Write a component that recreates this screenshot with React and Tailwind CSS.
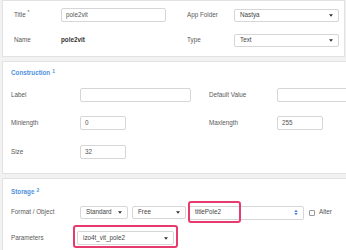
import React from 'react';

const Caret = () => (
  <svg width="4" height="3" viewBox="0 0 4 3" className="shrink-0">
    <path d="M0 0.3h4L2 2.8z" fill="#333" />
  </svg>
);

const UpDown = () => (
  <svg width="4" height="7" viewBox="0 0 4 7" className="shrink-0">
    <path d="M0.3 3L2 0.8 3.7 3z" fill="#4a7fd0" />
    <path d="M0.3 4L2 6.2 3.7 4z" fill="#4a7fd0" />
  </svg>
);

const Field = ({ value, w, h = 'h-[14px]' }) => (
  <div className={`${w} ${h} bg-white border border-[#d6d6d6] rounded-[2px] flex items-center px-[4px] text-[#555] shrink-0`}>
    {value}
  </div>
);

const Select = ({ value, w, h = 'h-[14px]', icon = 'caret' }) => (
  <div className={`${w} ${h} bg-white border border-[#d6d6d6] rounded-[2px] flex items-center justify-between pl-[5px] pr-[5px] text-[#444] shrink-0`}>
    <span>{value}</span>
    {icon === 'caret' ? <Caret /> : <UpDown />}
  </div>
);

const Label = ({ children, w }) => <div className={`${w} shrink-0 text-[#5a5a5a]`}>{children}</div>;

const Header = ({ children, n }) => (
  <div className="text-[#4f92e0] font-bold h-[10px] leading-[10px]">
    {children}
    <sup className="ml-[2px] text-[5px]">{n}</sup>
  </div>
);

export default function App() {
  return (
    <div
      className="w-[346px] h-[250px] overflow-hidden bg-[#f2f2f2] text-[6.3px] leading-none"
      style={{ fontFamily: '"Liberation Sans", Arial, sans-serif' }}
    >
      {/* top card */}
      <div className="ml-[2px] w-[343px] h-[57px] bg-white border border-[#e2e2e2] pt-[7px] pl-[11px]">
        <div className="flex items-center h-[14px]">
          <Label w="w-[47px]">Title <sup className="text-[5px]">*</sup></Label>
          <Field value="pole2vit" w="w-[105px]" />
          <div className="w-[21px]" />
          <Label w="w-[47px]">App Folder</Label>
          <Select value="Nastya" w="w-[105px]" h="h-[13px]" />
        </div>
        <div className="flex items-center h-[14px] mt-[11px]">
          <Label w="w-[47px]">Name</Label>
          <div className="w-[105px] shrink-0 font-bold text-[#333]">pole2vit</div>
          <div className="w-[21px]" />
          <Label w="w-[47px]">Type</Label>
          <Select value="Text" w="w-[105px]" h="h-[13px]" />
        </div>
      </div>

      {/* construction */}
      <div className="ml-[2px] mt-[4px] w-[360px] h-[113px] bg-white border border-[#e2e2e2] pt-[6px] pl-[8px]">
        <Header n="1">Construction</Header>
        <div className="flex items-center h-[14px] mt-[10px]">
          <Label w="w-[69px]">Label</Label>
          <Field value="" w="w-[111px]" />
          <div className="w-[18px]" />
          <Label w="w-[68px]">Default Value</Label>
          <Field value="" w="w-[80px]" />
        </div>
        <div className="flex items-center h-[14px] mt-[14px]">
          <Label w="w-[69px]">Minlength</Label>
          <Field value="0" w="w-[46px]" />
          <div className="w-[83px]" />
          <Label w="w-[68px]">Maxlength</Label>
          <Field value="255" w="w-[46px]" />
        </div>
        <div className="flex items-center h-[14px] mt-[15px]">
          <Label w="w-[69px]">Size</Label>
          <Field value="32" w="w-[46px]" />
        </div>
      </div>

      {/* storage */}
      <div className="ml-[2px] mt-[4px] w-[360px] h-[80px] bg-white border border-[#e2e2e2] pt-[8px] pl-[8px]">
        <Header n="2">Storage</Header>
        <div className="flex items-center h-[13px] mt-[9px]">
          <Label w="w-[69px]">Format / Object</Label>
          <Select value="Standard" w="w-[48px]" h="h-[13px]" />
          <div className="w-[4px]" />
          <Select value="Free" w="w-[54px]" h="h-[13px]" />
          <div className="w-[3px]" />
          <div className="relative">
            <Select value="titlePole2" w="w-[115px]" h="h-[14px]" icon="updown" />
            <div className="absolute left-[-1px] top-[-5px] w-[53px] h-[22px] border-2 border-[#e73a6e] rounded-[3px]" />
          </div>
          <div className="ml-[5px] w-[6px] h-[6px] border border-[#999] rounded-[1px] bg-white" />
          <span className="ml-[4px] text-[#555]">Alter</span>
        </div>
        <div className="flex items-center h-[14px] mt-[12px]">
          <Label w="w-[66px]">Parameters</Label>
          <div className="relative">
            <Select value="izo4t_vit_pole2" w="w-[97px]" h="h-[14px]" />
            <div className="absolute left-[-4px] top-[-6px] right-[-4px] bottom-[-3px] border-2 border-[#e73a6e] rounded-[3px]" />
          </div>
        </div>
      </div>
    </div>
  );
}
